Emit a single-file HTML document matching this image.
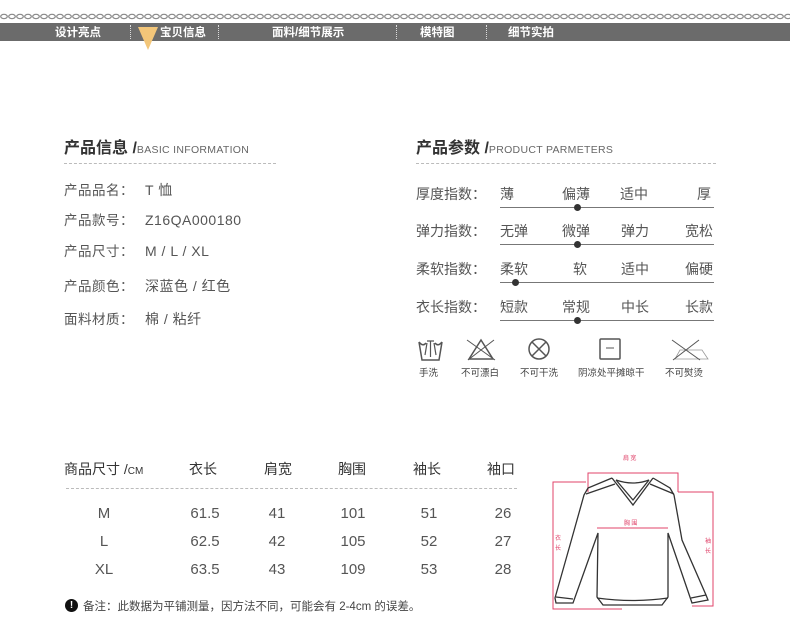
<!DOCTYPE html>
<html><head><meta charset="utf-8"><style>
*{margin:0;padding:0;box-sizing:border-box}
body{width:790px;height:636px;background:#fff;position:relative;overflow:hidden;font-family:"Liberation Sans","Noto Sans CJK SC",sans-serif;color:#555}
.a{position:absolute;white-space:nowrap}
.nav{position:absolute;left:0;top:23px;width:790px;height:18px;background:#6b6b6b}
.nav span{position:absolute;top:1px;color:#fff;font-size:11.5px;font-weight:bold}
.sep{position:absolute;top:2px;height:14px;border-left:1px dotted #ddd}
.t{font-size:16px;font-weight:bold;color:#333}
.t small{font-size:10.5px;font-weight:normal;color:#666;letter-spacing:0.3px}
.dash{position:absolute;height:0;border-top:1px dashed #bbb}
.l{font-size:13.5px;color:#555;letter-spacing:0.5px}
.lv{font-size:14px;color:#555;letter-spacing:0.5px;line-height:18px}
.v{font-size:14px;color:#555}
.line{position:absolute;left:500px;width:214px;height:1px;background:#777}
.dot{position:absolute;width:7px;height:7px;border-radius:50%;background:#333}
.ic{font-size:9.5px;color:#444}
.n{font-size:15px;color:#555;text-align:center;width:60px}
</style></head><body>
<svg class="a" style="left:0;top:12px" width="790" height="9"><defs><pattern id="c" width="8" height="9" patternUnits="userSpaceOnUse"><ellipse cx="4" cy="4.5" rx="3.3" ry="2.2" fill="none" stroke="#888" stroke-width="1.2"/></pattern></defs><rect width="790" height="9" fill="url(#c)"/></svg>
<div class="nav">
<span style="left:55px">设计亮点</span><div class="sep" style="left:130px"></div>
<span style="left:160px">宝贝信息</span><div class="sep" style="left:218px"></div>
<span style="left:272px">面料/细节展示</span><div class="sep" style="left:396px"></div>
<span style="left:420px">模特图</span><div class="sep" style="left:486px"></div>
<span style="left:508px">细节实拍</span>
</div>
<svg class="a" style="left:137px;top:27px" width="22" height="24"><polygon points="1,0 21,0 11,23" fill="#f3c679"/></svg>

<div class="a t" style="left:64px;top:134px">产品信息 /<small>BASIC INFORMATION</small></div>
<div class="dash" style="left:64px;top:163px;width:212px"></div>
<div class="a l" style="left:64px;top:179px">产品品名：</div><div class="a lv" style="left:145px;top:181px">T 恤</div>
<div class="a l" style="left:64px;top:209px">产品款号：</div><div class="a lv" style="left:145px;top:211px">Z16QA000180</div>
<div class="a l" style="left:64px;top:240px">产品尺寸：</div><div class="a lv" style="left:145px;top:242px">M / L / XL</div>
<div class="a l" style="left:64px;top:275px">产品颜色：</div><div class="a lv" style="left:145px;top:277px">深蓝色 / 红色</div>
<div class="a l" style="left:64px;top:308px">面料材质：</div><div class="a lv" style="left:145px;top:310px">棉 / 粘纤</div>

<div class="a t" style="left:416px;top:134px">产品参数 /<small>PRODUCT PARMETERS</small></div>
<div class="dash" style="left:416px;top:163px;width:300px"></div>

<div class="a v" style="left:416px;top:184px">厚度指数：</div>
<div class="a v" style="left:500px;top:184px">薄</div><div class="a v" style="left:562px;top:184px">偏薄</div><div class="a v" style="left:620px;top:184px">适中</div><div class="a v" style="left:697px;top:184px">厚</div>
<div class="line" style="top:207px"></div><div class="dot" style="left:574px;top:204px"></div>

<div class="a v" style="left:416px;top:221px">弹力指数：</div>
<div class="a v" style="left:500px;top:221px">无弹</div><div class="a v" style="left:562px;top:221px">微弹</div><div class="a v" style="left:621px;top:221px">弹力</div><div class="a v" style="left:685px;top:221px">宽松</div>
<div class="line" style="top:244px"></div><div class="dot" style="left:574px;top:241px"></div>

<div class="a v" style="left:416px;top:259px">柔软指数：</div>
<div class="a v" style="left:500px;top:259px">柔软</div><div class="a v" style="left:573px;top:259px">软</div><div class="a v" style="left:621px;top:259px">适中</div><div class="a v" style="left:685px;top:259px">偏硬</div>
<div class="line" style="top:282px"></div><div class="dot" style="left:512px;top:279px"></div>

<div class="a v" style="left:416px;top:297px">衣长指数：</div>
<div class="a v" style="left:500px;top:297px">短款</div><div class="a v" style="left:562px;top:297px">常规</div><div class="a v" style="left:621px;top:297px">中长</div><div class="a v" style="left:685px;top:297px">长款</div>
<div class="line" style="top:320px"></div><div class="dot" style="left:574px;top:317px"></div>

<svg class="a" style="left:410px;top:335px" width="310" height="30" fill="none" stroke="#555" stroke-width="1.5">
<path d="M9,7 L12,25 L29,25 L32,7 M9,7 Q13,12 16,8 M25,8 Q28,12 32,7"/><path d="M17,6 L24,6 M20.5,6 L20.5,22 M17,8 L15,20 M24,8 L26,20" stroke-width="1.2"/>
<path d="M59,24 L71,5 L83,24 Z"/><path d="M57,5 L85,25 M84,5 L58,25" stroke-width="1"/>
<circle cx="129" cy="14" r="10"/><path d="M122,7 L136,21 M136,7 L122,21"/>
<rect x="190" y="4" width="20" height="20" rx="1"/><path d="M196,13 L204,13" stroke-width="1"/>
<path d="M265,24 L270,15 L292,15 L298,24 Z" stroke-width="0.8" stroke="#999"/><path d="M262,5 L290,25 M289,5 L263,25" stroke-width="1"/>
</svg>
<div class="a ic" style="left:419px;top:365px">手洗</div>
<div class="a ic" style="left:461px;top:365px">不可漂白</div>
<div class="a ic" style="left:520px;top:365px">不可干洗</div>
<div class="a ic" style="left:578px;top:365px">阴凉处平摊晾干</div>
<div class="a ic" style="left:665px;top:365px">不可熨烫</div>

<div class="a v" style="left:64px;top:459px;color:#333">商品尺寸 /<span style="font-size:10px">CM</span></div>
<div class="a v" style="left:189px;top:459px;color:#333">衣长</div>
<div class="a v" style="left:264px;top:459px;color:#333">肩宽</div>
<div class="a v" style="left:338px;top:459px;color:#333">胸围</div>
<div class="a v" style="left:413px;top:459px;color:#333">袖长</div>
<div class="a v" style="left:487px;top:459px;color:#333">袖口</div>
<div class="dash" style="left:66px;top:488px;width:451px"></div>

<div class="a n" style="left:74px;top:505px">M</div><div class="a n" style="left:175px;top:505px">61.5</div><div class="a n" style="left:247px;top:505px">41</div><div class="a n" style="left:323px;top:505px">101</div><div class="a n" style="left:399px;top:505px">51</div><div class="a n" style="left:473px;top:505px">26</div>
<div class="a n" style="left:74px;top:533px">L</div><div class="a n" style="left:175px;top:533px">62.5</div><div class="a n" style="left:247px;top:533px">42</div><div class="a n" style="left:323px;top:533px">105</div><div class="a n" style="left:399px;top:533px">52</div><div class="a n" style="left:473px;top:533px">27</div>
<div class="a n" style="left:74px;top:561px">XL</div><div class="a n" style="left:175px;top:561px">63.5</div><div class="a n" style="left:247px;top:561px">43</div><div class="a n" style="left:323px;top:561px">109</div><div class="a n" style="left:399px;top:561px">53</div><div class="a n" style="left:473px;top:561px">28</div>

<div class="a" style="left:65px;top:599px;width:13px;height:13px;border-radius:50%;background:#111;color:#fff;font-size:10px;font-weight:bold;text-align:center;line-height:13px">!</div>
<div class="a" style="left:83px;top:598px;font-size:11.5px;color:#444">备注：此数据为平铺测量，因方法不同，可能会有 2-4cm 的误差。</div>

<svg class="a" style="left:540px;top:445px" width="200" height="175">
<g fill="none" stroke="#e0436a" stroke-width="1">
<path d="M48,47 L48,28 L138,28 L138,47"/>
<path d="M46,37 L13,37 L13,164 L82,164"/>
<path d="M138,47 L173,47 L173,161 L152,161"/>
<path d="M57,83 L128,83"/>
</g>
<g fill="none" stroke="#333" stroke-width="1.3">
<path d="M72,33 L48,43 L44,50 L30,100 L15,153 L16,158 L33,158 L58,88 L57,152 L63,160 L122,160 L128,152 L128,88 L152,158 L168,155 L166,150 L142,95 L134,50 L130,43 L113,33"/>
<path d="M72,33 L93,60 L113,33"/><path d="M76,35 L93,55 L109,35"/><path d="M76,35 Q93,41 109,35"/>
<path d="M46,49 L75,39"/><path d="M134,49 L110,39"/>
<path d="M57,153 Q93,158 128,153"/><path d="M16,152 L33,154"/><path d="M151,153 L166,150"/>
</g>
<g font-size="6" fill="#e0436a" font-family="Noto Sans CJK SC,sans-serif">
<text x="83" y="15">肩 宽</text><text x="84" y="80">胸 围</text>
<text x="15" y="95">衣</text><text x="15" y="105">长</text>
<text x="165" y="98">袖</text><text x="165" y="108">长</text>
</g>
</svg>
</body></html>
